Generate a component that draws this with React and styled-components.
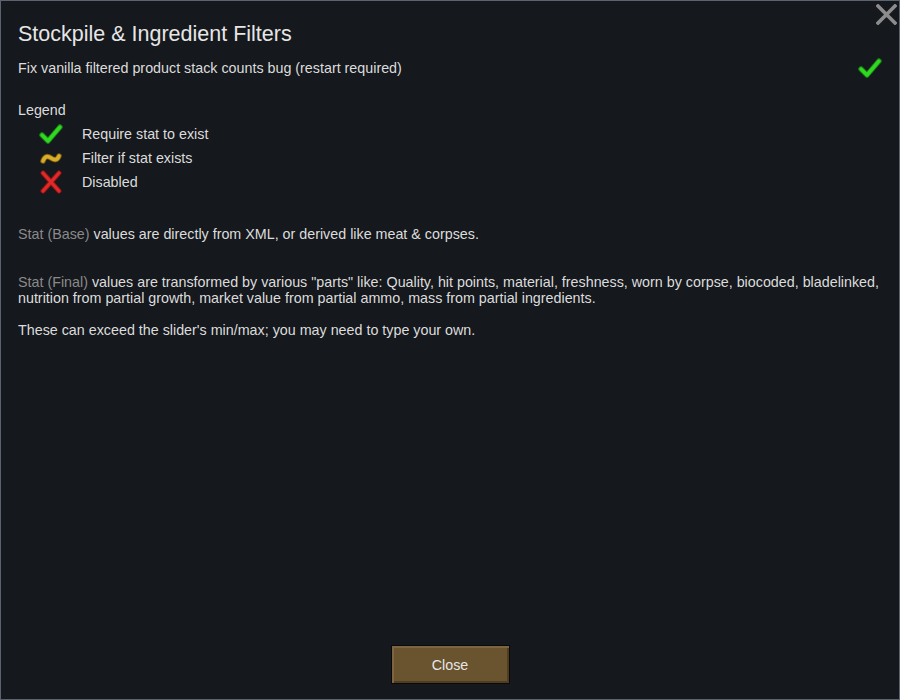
import React from "react";
import styled, { createGlobalStyle } from "styled-components";

const Global = createGlobalStyle`
  html, body { margin: 0; padding: 0; background: #15181d; }
  body { font-family: "Liberation Sans", Arial, sans-serif; }
`;

const Window = styled.div`
  box-sizing: border-box;
  width: 900px;
  height: 700px;
  border: 1px solid #5c636e;
  background: #15181d;
  color: #dcdcdc;
  position: relative;
  display: flex;
  flex-direction: column;
  padding: 21px 17px 15px 17px;
`;

const CloseX = styled.button`
  position: absolute;
  top: 3px;
  right: 2px;
  width: 21px;
  height: 21px;
  padding: 0;
  border: none;
  background: none;
  cursor: pointer;
`;

const Title = styled.h1`
  margin: 0;
  font-size: 21.5px;
  font-weight: normal;
  line-height: 24px;
  color: #e6e6e6;
`;

const SettingRow = styled.div`
  margin-top: 10px;
  display: flex;
  align-items: center;
  justify-content: space-between;
  font-size: 14.3px;
  line-height: 20px;
`;

const Section = styled.div`
  margin-top: ${(p) => p.$gap}px;
  font-size: 14.3px;
  line-height: 16px;
`;

const LegendList = styled.div`
  display: flex;
  flex-direction: column;
  margin-top: 4px;
`;

const LegendRow = styled.div`
  display: flex;
  align-items: center;
  height: 24px;
`;

const IconCell = styled.div`
  width: 24px;
  height: 24px;
  margin-left: 21px;
  margin-right: 19px;
  display: flex;
  align-items: center;
  justify-content: center;
`;

const Dim = styled.span`
  color: #8a8a8a;
`;

const Spacer = styled.div`
  flex: 1;
`;

const Footer = styled.div`
  display: flex;
  justify-content: center;
`;

const Button = styled.button`
  box-sizing: border-box;
  width: 119px;
  height: 39px;
  border: 1px solid #0a0a0a;
  background: #6a532f;
  box-shadow: inset 2px 2px 0 #7d6541, inset -2px -2px 0 #4f3d22;
  color: #e6e6e6;
  font-family: "Liberation Sans", Arial, sans-serif;
  font-size: 14.3px;
  cursor: pointer;
`;

const Check = ({ size = 24 }) => (
  <svg width={size} height={size} viewBox="0 0 24 24">
    <path d="M3 13 L9 19 L21 5" fill="none" stroke="#1a7a12" strokeWidth="5.5" strokeLinecap="round" strokeLinejoin="round" />
    <path d="M3 13 L9 19 L21 5" fill="none" stroke="#2fd823" strokeWidth="3.5" strokeLinecap="round" strokeLinejoin="round" />
  </svg>
);

const Tilde = () => (
  <svg width="24" height="24" viewBox="0 0 24 24">
    <path d="M4 15 C6 9.5, 9 10, 12 12 S 18 15, 20 10" fill="none" stroke="#7a5c0e" strokeWidth="5.5" strokeLinecap="round" />
    <path d="M4 15 C6 9.5, 9 10, 12 12 S 18 15, 20 10" fill="none" stroke="#d9ad2a" strokeWidth="3.6" strokeLinecap="round" />
  </svg>
);

const Cross = () => (
  <svg width="24" height="24" viewBox="0 0 24 24">
    <path d="M4 3 L20 21 M20 3 L4 21" fill="none" stroke="#8a1414" strokeWidth="5" strokeLinecap="round" />
    <path d="M4 3 L20 21 M20 3 L4 21" fill="none" stroke="#e02a2a" strokeWidth="3.2" strokeLinecap="round" />
  </svg>
);

const XIcon = () => (
  <svg width="21" height="21" viewBox="0 0 21 21">
    <path d="M2 2 L19 19 M19 2 L2 19" stroke="#8c8c8c" strokeWidth="3.6" strokeLinecap="square" />
  </svg>
);

export default function App() {
  return (
    <>
      <Global />
      <Window>
        <CloseX aria-label="Close"><XIcon /></CloseX>
        <Title>Stockpile &amp; Ingredient Filters</Title>
        <SettingRow>
          <span>Fix vanilla filtered product stack counts bug (restart required)</span>
          <Check />
        </SettingRow>
        <Section $gap={22}>
          Legend
          <LegendList>
            <LegendRow><IconCell><Check /></IconCell>Require stat to exist</LegendRow>
            <LegendRow><IconCell><Tilde /></IconCell>Filter if stat exists</LegendRow>
            <LegendRow><IconCell><Cross /></IconCell>Disabled</LegendRow>
          </LegendList>
        </Section>
        <Section $gap={32}>
          <Dim>Stat (Base)</Dim> values are directly from XML, or derived like meat &amp; corpses.
        </Section>
        <Section $gap={32}>
          <Dim>Stat (Final)</Dim> values are transformed by various "parts" like: Quality, hit points, material, freshness, worn by corpse, biocoded, bladelinked, nutrition from partial growth, market value from partial ammo, mass from partial ingredients.
        </Section>
        <Section $gap={16}>
          These can exceed the slider's min/max; you may need to type your own.
        </Section>
        <Spacer />
        <Footer>
          <Button>Close</Button>
        </Footer>
      </Window>
    </>
  );
}
